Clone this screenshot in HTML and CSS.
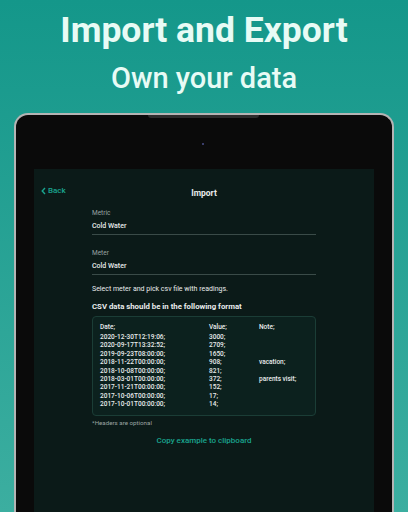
FILE: index.html
```html
<!DOCTYPE html>
<html lang="en">
<head>
<meta charset="UTF-8">
<title>Import and Export</title>
<link rel="stylesheet" href="styles.css">
</head>
<body>
<header class="promo">
  <h1>Import and Export</h1>
  <h2>Own your data</h2>
</header>
<div class="tablet">
  <div class="notch"></div>
  <div class="camera"></div>
  <div class="screen">
    <div class="topbar">
      <a class="back" href="#">
        <svg width="5" height="8" viewBox="0 0 5 8"><path d="M4 1 L1.2 4 L4 7" fill="none" stroke="#1aa58f" stroke-width="1.4"/></svg>
        Back
      </a>
      <span class="title">Import</span>
    </div>
    <div class="content">
      <div class="field">
        <div class="field-label">Metric</div>
        <div class="field-value">Cold Water</div>
      </div>
      <div class="field">
        <div class="field-label">Meter</div>
        <div class="field-value">Cold Water</div>
      </div>
      <p class="hint">Select meter and pick csv file with readings.</p>
      <h3>CSV data should be in the following format</h3>
      <div class="csv-box">
        <div class="csv-row csv-head"><span>Date;</span><span>Value;</span><span>Note;</span></div>
        <div class="csv-row"><span>2020-12-30T12:19:06;</span><span>3000;</span><span></span></div>
        <div class="csv-row"><span>2020-09-17T13:32:52;</span><span>2709;</span><span></span></div>
        <div class="csv-row"><span>2019-09-23T08:00:00;</span><span>1650;</span><span></span></div>
        <div class="csv-row"><span>2018-11-22T00:00:00;</span><span>908;</span><span>vacation;</span></div>
        <div class="csv-row"><span>2018-10-08T00:00:00;</span><span>821;</span><span></span></div>
        <div class="csv-row"><span>2018-03-01T00:00:00;</span><span>372;</span><span>parents visit;</span></div>
        <div class="csv-row"><span>2017-11-21T00:00:00;</span><span>152;</span><span></span></div>
        <div class="csv-row"><span>2017-10-06T00:00:00;</span><span>17;</span><span></span></div>
        <div class="csv-row"><span>2017-10-01T00:00:00;</span><span>14;</span><span></span></div>
      </div>
      <p class="note">*Headers are optional</p>
      <a class="copy" href="#">Copy example to clipboard</a>
    </div>
  </div>
</div>
</body>
</html>
```
FILE: styles.css
```css
html, body {
  height: 100%;
}
body {
  margin: 0;
  overflow: hidden;
  display: flex;
  flex-direction: column;
  background: linear-gradient(#14978a, #3caea0);
  font-family: Roboto, "Liberation Sans", sans-serif;
}
.promo {
  text-align: center;
  color: #e8fbf5;
  padding-top: 9px;
  height: 106px;
  box-sizing: border-box;
}
.promo h1 {
  margin: 0;
  font-size: 35.5px;
  line-height: 42px;
  font-weight: 700;
}
.promo h2 {
  margin: 12px 0 0;
  font-size: 29px;
  line-height: 30px;
  font-weight: 500;
}
.tablet {
  position: relative;
  flex: 1;
  margin: 7px 14px 0;
  border: 2px solid #b4b4b4;
  border-bottom: none;
  border-radius: 14px 14px 0 0;
  background: #0a0a0a;
  padding: 54px 18px 0;
  display: flex;
}
.notch {
  position: absolute;
  top: 0;
  left: 132px;
  width: 111px;
  height: 3px;
  background: #2c2c2c;
  border-radius: 0 0 3px 3px;
}
.camera {
  position: absolute;
  top: 28px;
  left: 186px;
  width: 2px;
  height: 2px;
  border-radius: 50%;
  background: #4a4f8a;
}
.screen {
  flex: 1;
  background: #0b1a18;
  color: #e9ecec;
}
.topbar {
  position: relative;
  padding-top: 16px;
  height: 12px;
  line-height: 12px;
  text-align: center;
}
.back {
  position: absolute;
  left: 7px;
  top: 16px;
  display: flex;
  align-items: center;
  gap: 2px;
  color: #1aa58f;
  font-size: 8px;
  font-weight: 500;
  text-decoration: none;
}
.title {
  font-size: 8.5px;
  font-weight: 700;
}
.content {
  width: 224px;
  margin: 0 auto;
  padding-top: 11px;
}
.field {
  border-bottom: 1px solid #3a4b48;
  padding-bottom: 3px;
  margin-bottom: 13px;
}
.field-label {
  font-size: 6.5px;
  line-height: 10px;
  color: #9aa4a2;
}
.field-value {
  margin-top: 3px;
  font-size: 7px;
  line-height: 10px;
  font-weight: 500;
}
.hint {
  margin: -4px 0 0;
  font-size: 7px;
  line-height: 10px;
}
h3 {
  margin: 7px 0 3px;
  font-size: 7.8px;
  line-height: 12px;
  font-weight: 700;
}
.csv-box {
  border: 1px solid #1b3d36;
  border-radius: 4px;
  background: #0c211e;
  padding: 6px 7px 6px;
}
.csv-row {
  display: grid;
  grid-template-columns: 109px 50px 1fr;
  font-size: 6.5px;
  line-height: 8.4px;
  font-weight: 500;
}
.csv-head {
  margin-bottom: 1.5px;
}
.note {
  margin: 3px 0 0;
  font-size: 6.2px;
  line-height: 8px;
  color: #9aa4a2;
}
.copy {
  display: block;
  margin-top: 9px;
  text-align: center;
  color: #1aa58f;
  font-size: 8px;
  line-height: 10px;
  font-weight: 500;
  text-decoration: none;
}
```
